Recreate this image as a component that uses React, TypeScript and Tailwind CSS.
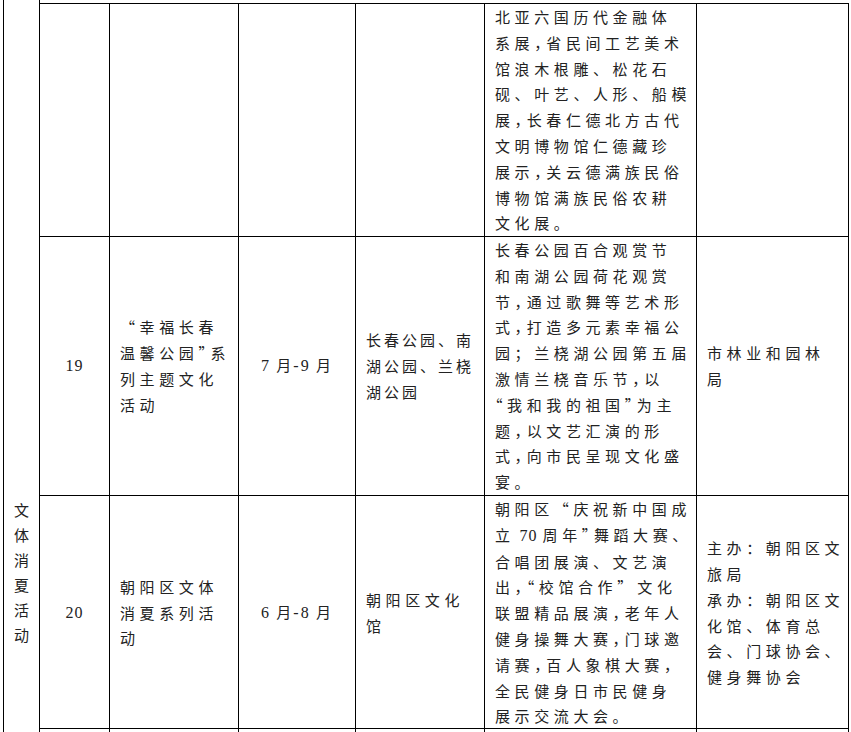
import React from "react";

function Line({ t, halfStart }: { t: string; halfStart?: boolean }) {
  const parts = t.split(/( ?\d+ ?|，|”)/);
  return (
    <div className="whitespace-nowrap">
      {parts.map((p, i) => {
        if (/\d/.test(p))
          return (
            <span key={i} className="font-['Liberation_Serif',serif] text-[16px] tracking-[1px]">
              {p}
            </span>
          );
        if (p === "，" || p === "”")
          return (
            <span key={i} className="[font-feature-settings:'halt']">
              {p}
            </span>
          );
        if (halfStart && i === 0 && p.startsWith("“"))
          return (
            <React.Fragment key={i}>
              <span className="[font-feature-settings:'halt']">“</span>
              {p.slice(1)}
            </React.Fragment>
          );
        return <React.Fragment key={i}>{p}</React.Fragment>;
      })}
    </div>
  );
}

function TextCell({
  lines,
  tight,
  halfStart,
}: {
  lines: string[];
  tight?: boolean;
  halfStart?: boolean;
}) {
  return (
    <div
      className={
        "flex flex-col justify-center border-r border-black leading-[25.8px] pl-[10px] " +
        (tight ? "tracking-[3px]" : "")
      }
    >
      {lines.map((l, i) => (
        <Line key={i} t={l} halfStart={halfStart} />
      ))}
    </div>
  );
}

function NumCell({ n }: { n: string }) {
  return (
    <div className="flex items-center justify-center border-r border-black font-['Liberation_Serif',serif] text-[16px] tracking-[1px]">
      {n}
    </div>
  );
}

function DateCell({ a, b }: { a: string; b: string }) {
  return (
    <div className="flex items-center justify-center border-r border-black text-[15px]">
      <span className="whitespace-nowrap tracking-[2px]">
        <span className="font-['Liberation_Serif',serif] text-[16px]">{a}</span>
        {" "}月
        <span className="font-['Liberation_Serif',serif] text-[16px]">-{b}</span>
        {" "}月
      </span>
    </div>
  );
}

function Empty() {
  return <div className="border-r border-black" />;
}

const rowCls =
  "grid grid-cols-[70px_129px_117px_129px_212px_152px] border-t border-black";

export default function App() {
  return (
    <div className="w-[851px] h-[732px] overflow-hidden bg-white pl-[3px] flex text-[15px] tracking-[4.6px] text-[#222] font-['Noto_Sans_CJK_SC',sans-serif]">
      {/* merged category column */}
      <div className="w-[37px] h-full border-x border-black pt-[497px] flex flex-col items-center leading-[25px] tracking-normal">
        {"文体消夏活动".split("").map((c, i) => (
          <div key={i}>{c}</div>
        ))}
      </div>

      <div className="mt-[3px] w-[809px] flex flex-col">
        {/* continued row */}
        <div className={rowCls + " h-[233px]"}>
          <Empty />
          <Empty />
          <Empty />
          <Empty />
          <TextCell
            lines={[
              "北亚六国历代金融体",
              "系展，省民间工艺美术",
              "馆浪木根雕、松花石",
              "砚、叶艺、人形、船模",
              "展，长春仁德北方古代",
              "文明博物馆仁德藏珍",
              "展示，关云德满族民俗",
              "博物馆满族民俗农耕",
              "文化展。",
            ]}
          />
          <Empty />
        </div>

        {/* row 19 */}
        <div className={rowCls + " h-[259px]"}>
          <NumCell n="19" />
          <TextCell lines={["“幸福长春", "温馨公园”系", "列主题文化", "活动"]} />
          <DateCell a="7" b="9" />
          <TextCell tight lines={["长春公园、南", "湖公园、兰桡", "湖公园"]} />
          <TextCell
            halfStart
            lines={[
              "长春公园百合观赏节",
              "和南湖公园荷花观赏",
              "节，通过歌舞等艺术形",
              "式，打造多元素幸福公",
              "园；兰桡湖公园第五届",
              "激情兰桡音乐节，以",
              "“我和我的祖国”为主",
              "题，以文艺汇演的形",
              "式，向市民呈现文化盛",
              "宴。",
            ]}
          />
          <TextCell lines={["市林业和园林", "局"]} />
        </div>

        {/* row 20 */}
        <div className={rowCls + " h-[233px]"}>
          <NumCell n="20" />
          <TextCell lines={["朝阳区文体", "消夏系列活", "动"]} />
          <DateCell a="6" b="8" />
          <TextCell lines={["朝阳区文化", "馆"]} />
          <TextCell
            lines={[
              "朝阳区“庆祝新中国成",
              "立 70 周年”舞蹈大赛、",
              "合唱团展演、文艺演",
              "出，“校馆合作” 文化",
              "联盟精品展演，老年人",
              "健身操舞大赛，门球邀",
              "请赛，百人象棋大赛，",
              "全民健身日市民健身",
              "展示交流大会。",
            ]}
          />
          <TextCell
            lines={[
              "主办：朝阳区文",
              "旅局",
              "承办：朝阳区文",
              "化馆、体育总",
              "会、门球协会、",
              "健身舞协会",
            ]}
          />
        </div>

        {/* next row (cut off) */}
        <div className={rowCls + " flex-1"}>
          <Empty />
          <Empty />
          <Empty />
          <Empty />
          <Empty />
          <Empty />
        </div>
      </div>
    </div>
  );
}
